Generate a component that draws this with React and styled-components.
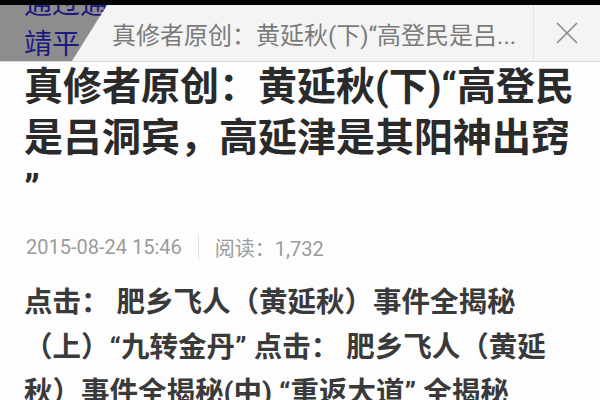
import React from "react";
import styled, { createGlobalStyle } from "styled-components";

const Global = createGlobalStyle`
  html, body { margin: 0; padding: 0; background: #fdfdfd; }
  body {
    font-family: Roboto, "Noto Sans CJK SC", sans-serif;
    -webkit-font-smoothing: antialiased;
  }
`;

const Page = styled.div`
  width: 600px;
  height: 400px;
  overflow: hidden;
  background: #fdfdfd;
`;

const StatusBar = styled.div`
  height: 5px;
  background: #050505;
`;

const Header = styled.header`
  position: relative;
  display: flex;
  align-items: stretch;
  height: 56px;
  background: #f4f4f4;
  border-bottom: 1px solid #d9d9d9;
`;

const Peek = styled.div`
  position: absolute;
  left: 0;
  top: 0;
  bottom: 0;
  width: 110px;
  background: #8d8d8d;
  clip-path: polygon(0 0, 107px 0, 72px 100%, 0 100%);
  overflow: hidden;
`;

const PeekText = styled.div`
  margin-top: -23px;
  padding-left: 24px;
  font-family: "Noto Sans CJK SC", sans-serif;
  font-size: 28px;
  line-height: 40px;
  color: #1c1a80;
  white-space: nowrap;
`;

const HeaderTitle = styled.div`
  flex: 1;
  min-width: 0;
  display: flex;
  align-items: center;
  padding-left: 112px;
  font-size: 24px;
  color: #7a7a7a;
  white-space: nowrap;
  overflow: hidden;
`;

const CloseButton = styled.button`
  width: 67px;
  flex: none;
  border: 0;
  border-left: 1px solid #e2e2e2;
  background: transparent;
  display: flex;
  align-items: center;
  justify-content: center;
  padding: 0;
`;

const Article = styled.main`
  padding: 0 24px;
`;

const Title = styled.h1`
  margin: 0;
  font-size: 39px;
  line-height: 51px;
  font-weight: 700;
  color: #2a2a2a;
  line-break: anywhere;
`;

const Meta = styled.div`
  display: flex;
  align-items: center;
  margin-top: 17px;
  height: 30px;
  padding-left: 2px;
  font-size: 20px;
  color: #9b9b9b;
`;

const MetaDivider = styled.span`
  width: 1px;
  height: 25px;
  background: #e3e3e3;
  margin: 0 16px;
`;

const Body = styled.p`
  margin: 18px 0 0;
  font-size: 28.5px;
  line-height: 45px;
  font-weight: 700;
  color: #3a3a3a;
`;

const CloseIcon = () => (
  <svg width="22" height="22" viewBox="0 0 22 22">
    <path d="M1 1L21 21M21 1L1 21" stroke="#8a8a8a" strokeWidth="1.6" fill="none" />
  </svg>
);

export default function App() {
  return (
    <Page>
      <Global />
      <StatusBar />
      <Header>
        <HeaderTitle>真修者原创：黄延秋(下)“高登民是吕...</HeaderTitle>
        <CloseButton aria-label="关闭">
          <CloseIcon />
        </CloseButton>
        <Peek>
          <PeekText>
            通过通
            <br />
            靖平
          </PeekText>
        </Peek>
      </Header>
      <Article>
        <Title>真修者原创：黄延秋(下)“高登民是吕洞宾，高延津是其阳神出窍”</Title>
        <Meta>
          <span>2015-08-24 15:46</span>
          <MetaDivider />
          <span>阅读：1,732</span>
        </Meta>
        <Body>
          点击： 肥乡飞人（黄延秋）事件全揭秘（上）“九转金丹” 点击： 肥乡飞人（黄延秋）事件全揭秘(中) “重返大道” 全揭秘
        </Body>
      </Article>
    </Page>
  );
}
